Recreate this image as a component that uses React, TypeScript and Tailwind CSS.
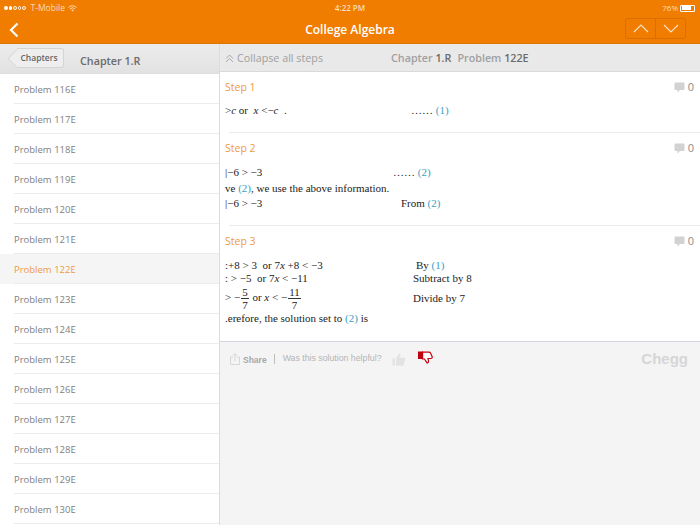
import React from 'react';

const problems = ['116E', '117E', '118E', '119E', '120E', '121E', '122E', '123E', '124E', '125E', '126E', '127E', '128E', '129E', '130E'];

const sans = "font-['Open_Sans',sans-serif]";
const serif = "font-['Liberation_Serif',serif]";

function Ref({ n }: { n: number }) {
    return <span className="text-[#3aa0bf]">({n})</span>;
}

function CommentCount() {
    return (
        <div className="flex items-center gap-[3px] pt-[2px] text-[11px] text-[#8a8a8a]">
            <svg width="11" height="11" viewBox="0 0 11 11">
                <path d="M1.5 0.5h8a1 1 0 0 1 1 1v5.5a1 1 0 0 1-1 1H6L3.5 10.5V8h-2a1 1 0 0 1-1-1V1.5a1 1 0 0 1 1-1z" fill="#d2d2d2" />
            </svg>
            <span>0</span>
        </div>
    );
}

function StepTitle({ label }: { label: string }) {
    return (
        <div className="flex items-center justify-between pl-[5px] pr-[6px] h-[28px]">
            <span className="pt-[4px] text-[10.5px] text-[#ee9a45]">{label}</span>
            <CommentCount />
        </div>
    );
}

function MathRow({ left, right, note, className }: { left: React.ReactNode; right?: number; note?: React.ReactNode; className?: string }) {
    return (
        <div className={`flex items-center pl-[5px] text-[11px] text-[#222] whitespace-pre ${serif} ${className ?? ''}`}>
            <div className="shrink-0" style={{ width: right }}>{left}</div>
            {note && <div>{note}</div>}
        </div>
    );
}

function Fraction({ top, bottom }: { top: string; bottom: string }) {
    return (
        <span className="inline-flex flex-col items-center align-middle leading-[12px] mx-[1px]">
            <span className="border-b border-[#333] px-[1px]">{top}</span>
            <span>{bottom}</span>
        </span>
    );
}

export default function App() {
    return (
        <div className={`w-[700px] h-[525px] overflow-hidden flex flex-col bg-[#f4f4f5] ${sans}`}>
            {/* status + nav */}
            <div className="h-[44px] bg-[#f07d00] text-white shrink-0 flex flex-col border-b border-[#dc7604]">
                <div className="h-[16px] flex items-center justify-between pl-[4px] pr-[5px] text-[8px] text-[#fbdcb8] relative">
                    <div className="flex items-center gap-[3px]">
                        <div className="flex items-center gap-[1px] mr-[2px]">
                            <span className="w-[3.5px] h-[3.5px] rounded-full bg-white" />
                            <span className="w-[3.5px] h-[3.5px] rounded-full bg-white" />
                            <span className="w-[3.5px] h-[3.5px] rounded-full border-[0.5px] border-white" />
                            <span className="w-[3.5px] h-[3.5px] rounded-full border-[0.5px] border-white" />
                            <span className="w-[3.5px] h-[3.5px] rounded-full border-[0.5px] border-white" />
                        </div>
                        <span className="text-[8.5px]">T-Mobile</span>
                        <svg width="9" height="7" viewBox="0 0 9 7" fill="none" stroke="#fbdcb8" strokeWidth="1">
                            <path d="M0.5 2.5a5.5 5.5 0 0 1 8 0M2 4a3.5 3.5 0 0 1 5 0" />
                            <path d="M3.3 5.2a1.6 1.6 0 0 1 2.4 0L4.5 6.6z" fill="#fbdcb8" stroke="none" />
                        </svg>
                    </div>
                    <span className="absolute left-0 right-0 text-center font-semibold">4:22 PM</span>
                    <div className="flex items-center gap-[2px]">
                        <span>76%</span>
                        <div className="w-[15px] h-[7px] border-[0.5px] border-white rounded-[1px] p-[0.5px]">
                            <div className="h-full w-[76%] bg-white" />
                        </div>
                    </div>
                </div>
                <div className="flex-1 flex items-center justify-between pl-[9px] pr-[14px] relative">
                    <svg width="10" height="16" viewBox="0 0 10 16" fill="none" stroke="white" strokeWidth="2.2">
                        <path d="M8.5 1.5L2 8l6.5 6.5" />
                    </svg>
                    <span className="absolute left-0 right-0 text-center text-[12px] font-semibold">College Algebra</span>
                    <div className="flex h-[21px] w-[61px] -mt-[3px] border border-[#d96f00] rounded-[3px] relative">
                        <div className="flex-1 flex items-center justify-center border-r border-[#d96f00]">
                            <svg width="16" height="9" viewBox="0 0 16 9" fill="none" stroke="#fde3c8" strokeWidth="1.1">
                                <path d="M1 8l7-7 7 7" />
                            </svg>
                        </div>
                        <div className="flex-1 flex items-center justify-center">
                            <svg width="16" height="9" viewBox="0 0 16 9" fill="none" stroke="#fde3c8" strokeWidth="1.1">
                                <path d="M1 1l7 7 7-7" />
                            </svg>
                        </div>
                    </div>
                </div>
            </div>

            <div className="flex-1 flex min-h-0">
                {/* chapters list */}
                <div className="w-[220px] shrink-0 bg-white border-r border-[#dcdcdc] flex flex-col">
                    <div className="h-[30px] shrink-0 bg-gradient-to-b from-[#ececec] to-[#e2e2e2] flex items-center pl-[17px] gap-[16px] border-b border-[#dedede]">
                        <div className="relative h-[20px] w-[47px] -mt-[1px] border border-l-0 border-[#d4d4d4] rounded-r-[3px] flex items-center justify-center text-[8.5px] font-semibold text-[#666] bg-[#eeeeee]">
                            <div className="absolute -left-[7px] top-[3px] w-[13px] h-[13px] rotate-45 border-l border-b border-[#d4d4d4] bg-[#eeeeee] rounded-bl-[2px]" />
                            <span className="relative -ml-[2px]">Chapters</span>
                        </div>
                        <span className="text-[10.75px] font-semibold text-[#6b6b6b] mt-[6px]">Chapter 1.R</span>
                    </div>
                    {problems.map((p) => (
                        <div key={p} className={`h-[30px] shrink-0 pl-[14px] ${p === '122E' ? 'bg-[#f5f5f5]' : ''}`}>
                            <div className={`h-full flex items-center pt-[4px] border-b border-[#ececec] text-[9.5px] ${p === '122E' ? 'text-[#ee9a45]' : 'text-[#808080]'}`}>
                                Problem {p}
                            </div>
                        </div>
                    ))}
                </div>

                {/* solution pane */}
                <div className="flex-1 flex flex-col min-w-0">
                    <div className="h-[28px] shrink-0 bg-[#e9e9e9] border-b border-[#d9d9d9] flex items-center pl-[5px] pt-[1px] relative">
                        <svg width="9" height="9" viewBox="0 0 9 9" fill="none" stroke="#a0a0a0" strokeWidth="0.9">
                            <path d="M1 4.5L4.5 1 8 4.5M1 8L4.5 4.5 8 8" />
                        </svg>
                        <span className="ml-[3px] text-[10.75px] text-[#a0a0a0]">Collapse all steps</span>
                        <div className="absolute left-[171px] text-[10.75px] font-semibold text-[#a0a0a0] whitespace-nowrap">
                            Chapter <span className="text-[#6b6b6b]">1.R</span>
                            <span className="ml-[6px]">Problem</span> <span className="text-[#6b6b6b]">122E</span>
                        </div>
                    </div>

                    <div className="bg-white shrink-0 border-b border-[#d4d4e0] h-[270px]">
                        <div className="h-[61px] ml-[9px] border-b border-[#ececec]">
                            <div className="-ml-[9px]">
                                <StepTitle label="Step 1" />
                                <MathRow className="mt-[2px]" left={<span>&gt;<i>c</i> or  <i>x</i> &lt;−<i>c</i>  .</span>} right={186} note={<span>…… <Ref n={1} /></span>} />
                            </div>
                        </div>
                        <div className="h-[93px] ml-[9px] border-b border-[#ececec]">
                            <div className="-ml-[9px]">
                                <StepTitle label="Step 2" />
                                <div className="mt-[5px] flex flex-col gap-[3.5px] leading-[12px]">
                                    <MathRow left="|−6 > −3" right={168} note={<span>…… <Ref n={2} /></span>} />
                                    <MathRow left={<span>ve <Ref n={2} />, we use the above information.</span>} />
                                    <MathRow left="|−6 > −3" right={176} note={<span>From <Ref n={2} /></span>} />
                                </div>
                            </div>
                        </div>
                        <div>
                            <StepTitle label="Step 3" />
                            <div className="mt-[5px] flex flex-col leading-[13px]">
                                <MathRow left={<span>:+8 &gt; 3  or 7<i>x</i> +8 &lt; −3</span>} right={191} note={<span>By <Ref n={1} /></span>} />
                                <MathRow left={<span>: &gt; −5  or 7<i>x</i> &lt; −11</span>} right={188} note="Subtract by 8" />
                                <MathRow className="h-[27px]" left={<span>&gt; −<Fraction top="5" bottom="7" /> or <i>x</i> &lt; −<Fraction top="11" bottom="7" /></span>} right={188} note="Divide by 7" />
                                <MathRow left={<span>.erefore, the solution set to <Ref n={2} /> is</span>} />
                            </div>
                        </div>
                    </div>

                    <div className="h-[34px] flex items-center pl-[10px] pr-[12px] shrink-0">
                        <svg width="10" height="12" viewBox="0 0 10 12" fill="none" stroke="#cfcfcf" strokeWidth="0.8">
                            <path d="M3 4H0.5v7.5h9V4H7M5 8V0.8M3.2 2.4L5 0.8l1.8 1.6" />
                        </svg>
                        <span className="ml-[3px] text-[8.5px] font-semibold text-[#a8a8a8] mt-[2px] font-['Liberation_Sans',sans-serif]">Share</span>
                        <span className="ml-[7px] w-px h-[10px] bg-[#bdbdbd]" />
                        <span className="ml-[8px] text-[8.75px] text-[#b4b4b4] font-['Liberation_Sans',sans-serif]">Was this solution helpful?</span>
                        <svg className="ml-[10px]" width="14" height="13" viewBox="0 0 14 13" fill="#e3e3e3">
                            <path d="M0.5 5.5h2.5v7H0.5zM4 5.5L7 0.5c1.2 0 1.7 1 1.4 2L8 4.7h4.3c.9 0 1.3.9 1 1.6l-1.8 5.6c-.2.5-.6.8-1.1.8H4z" />
                        </svg>
                        <svg className="ml-[12px] -mt-[3px]" width="15" height="13" viewBox="0 0 15 13" fill="#fff" stroke="#c2000d" strokeWidth="1.2">
                            <path d="M4.5 1.2h6.5c.8 0 1.3.4 1.6 1l1.6 3.6c.3.9-.4 1.7-1.2 1.7H10l.5 2.4c.2 1-.5 2-1.5 2L6.5 8H4.5z" />
                            <path d="M0.5 1h4v6.5h-4z" fill="#c2000d" />
                        </svg>
                        <span className="ml-auto text-[15px] font-bold text-[#d6d6d6] font-['Liberation_Sans',sans-serif]">Chegg</span>
                    </div>
                    <div className="flex-1" />
                </div>
            </div>
        </div>
    );
}
